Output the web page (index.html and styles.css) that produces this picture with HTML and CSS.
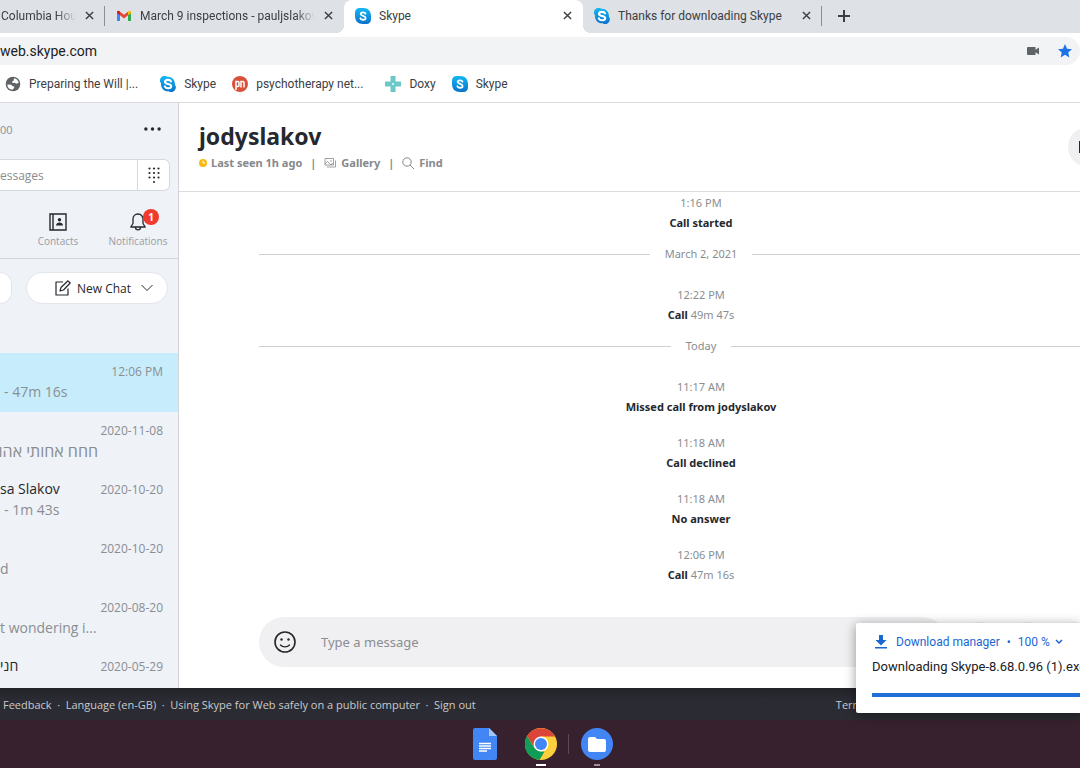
FILE: index.html
```html
<!DOCTYPE html>
<html lang="en">
<head>
    <meta charset="UTF-8">
    <meta name="viewport" content="width=device-width, initial-scale=1.0">
    <title>Skype</title>
    <link rel="stylesheet" href="styles.css">
</head>
<body>
    <!-- Shared icons -->
    <svg class="sprites" aria-hidden="true">
        <defs>
            <linearGradient id="skypeBlue" x1="0" y1="0" x2="0" y2="1">
                <stop offset="0" stop-color="#14b8f2"/>
                <stop offset="1" stop-color="#0a72cc"/>
            </linearGradient>
        </defs>
        <symbol id="skype" viewBox="0 0 16 16">
            <path fill="url(#skypeBlue)" d="M4.500 0h4C13 0 16 3 16 8v3.500A4.500 4.500 0 0 1 11.500 16H8C3 16 0 13 0 8V4.500A4.500 4.500 0 0 1 4.500 0z"/>
            <path fill="none" stroke="#fff" stroke-width="1.800" stroke-linecap="round" d="M10.500 5.600C9.800 3.800 5.700 3.800 5.700 6c0 2.300 4.900 1.400 4.900 3.900 0 2.300-4.300 2.500-5.200.4"/>
        </symbol>
        <symbol id="skype-old" viewBox="0 0 16 16">
            <path fill="url(#skypeBlue)" d="M4.500 0c1 0 1.800.3 2.500.8 4.600-.7 8.600 3.200 7.800 7.900A4.700 4.700 0 0 1 8.700 15C4.300 15.700.5 12 1.200 7.200A4.600 4.600 0 0 1 4.500 0z"/>
            <path fill="url(#skypeBlue)" d="M0 4.500A4.500 4.500 0 0 1 7 .8l8 8.200a4.500 4.500 0 0 1-6.300 6.200C4 15.500 1 12 1.200 7.500A4.500 4.500 0 0 1 0 4.500z"/>
            <path fill="none" stroke="#fff" stroke-width="2.100" stroke-linecap="round" d="M11 5.400C10 3.200 5 3.300 5 6c0 2.700 6.200 1.300 6.200 4.200 0 2.600-5.400 2.800-6.400.2"/>
        </symbol>
        <symbol id="close" viewBox="0 0 10 10">
            <path fill="none" stroke="currentColor" stroke-width="1.600" d="M1 1l8 8M9 1L1 9"/>
        </symbol>
    </svg>

    <header class="browser">
        <div class="tabs">
            <div class="tab tab-first">
                <span class="tab-title">Columbia House</span>
                <button class="tab-close" aria-label="Close tab"><svg><use href="#close"/></svg></button>
            </div>
            <div class="tab">
                <svg class="favicon" viewBox="0 0 16 16">
                    <path fill="#4285f4" d="M1 4v9h3V6.500L1 4z"/>
                    <path fill="#34a853" d="M12 6.500V13h3V4l-3 2.500z"/>
                    <path fill="#ea4335" d="M4 3.800l4 3 4-3v3.500l-4 3.100-4-3.100z"/>
                    <path fill="#c5221f" d="M1 4.200C1 2.400 2.800 2.300 4 3.400v3.900L1 5z"/>
                    <path fill="#fbbc04" d="M15 4.200c0-1.800-1.800-1.900-3-.8v3.900L15 5z"/>
                </svg>
                <span class="tab-title">March 9 inspections - pauljslakov</span>
                <button class="tab-close" aria-label="Close tab"><svg><use href="#close"/></svg></button>
            </div>
            <div class="tab active">
                <svg class="favicon"><use href="#skype"/></svg>
                <span class="tab-title">Skype</span>
                <button class="tab-close" aria-label="Close tab"><svg><use href="#close"/></svg></button>
            </div>
            <div class="tab">
                <svg class="favicon"><use href="#skype-old"/></svg>
                <span class="tab-title">Thanks for downloading Skype</span>
                <button class="tab-close" aria-label="Close tab"><svg><use href="#close"/></svg></button>
            </div>
            <button class="new-tab" aria-label="New tab">
                <svg viewBox="0 0 12 12"><path stroke="currentColor" stroke-width="2" d="M6 0v12M0 6h12"/></svg>
            </button>
        </div>
        <div class="address-bar">
            <input type="text" aria-label="Address" value="web.skype.com">
            <svg class="camera" viewBox="0 0 12 8"><path fill="#5f6368" d="M1 0h7.500v2.800L12 .5v7L8.500 5.200V8H1a1 1 0 0 1-1-1V1a1 1 0 0 1 1-1z"/></svg>
            <svg class="star" viewBox="0 0 20 20"><path fill="#1a73e8" d="M10 0l2.900 6.800 7.100.6-5.400 4.700 1.600 7.100L10 15.500l-6.200 3.700 1.600-7.100L0 7.400l7.100-.6z"/></svg>
        </div>
        <nav class="bookmarks">
            <a href="#" class="long">
                <svg viewBox="0 0 16 16"><circle cx="8" cy="8" r="7.300" fill="#5f6368"/><path fill="#fff" d="M9 2.300a5.800 5.800 0 0 1 4.700 4.500l-2.400.9-1.600-1-2.300.3-.3-1.500 1.500-.8zM2.300 8.500l4 .2 1.300 1.500 1.800.4-.5 1.700-1.600 1.500A5.800 5.800 0 0 1 2.300 8.500z"/></svg>
                <span>Preparing the Will |...</span>
            </a>
            <a href="#"><svg><use href="#skype-old"/></svg><span>Skype</span></a>
            <a href="#" class="long">
                <svg viewBox="0 0 16 16"><circle cx="8" cy="8" r="8" fill="#d9503a"/><path fill="none" stroke="#fff" stroke-width="1.500" d="M4 14V5.500h2a1 1 0 0 1 1 1V9.500a1 1 0 0 1-1 1H4M9 11.500V5.500h2a1 1 0 0 1 1 1v5"/></svg>
                <span>psychotherapy net...</span>
            </a>
            <a href="#">
                <svg viewBox="0 0 16 16"><path fill="#6cc9c8" d="M5.500 0h5v5.500H16v5h-5.500V16h-5v-5.500H0v-5h5.500z"/><circle cx="8" cy="8" r="1" fill="#fff"/></svg>
                <span>Doxy</span>
            </a>
            <a href="#"><svg><use href="#skype"/></svg><span>Skype</span></a>
        </nav>
    </header>

    <main>
        <aside class="sidebar">
            <div class="profile">
                <span>00</span>
                <button aria-label="More">
                    <svg viewBox="0 0 18 4"><circle cx="2" cy="2" r="1.800"/><circle cx="9" cy="2" r="1.800"/><circle cx="16" cy="2" r="1.800"/></svg>
                </button>
            </div>
            <div class="search">
                <input type="text" aria-label="Search messages" placeholder="essages">
                <button aria-label="Dial pad">
                    <svg viewBox="0 0 12 16">
                        <circle cx="1.500" cy="1.500" r="1.100"/><circle cx="6" cy="1.500" r="1.100"/><circle cx="10.500" cy="1.500" r="1.100"/>
                        <circle cx="1.500" cy="6" r="1.100"/><circle cx="6" cy="6" r="1.100"/><circle cx="10.500" cy="6" r="1.100"/>
                        <circle cx="1.500" cy="10.500" r="1.100"/><circle cx="6" cy="10.500" r="1.100"/><circle cx="10.500" cy="10.500" r="1.100"/>
                        <circle cx="6" cy="15" r="1"/>
                    </svg>
                </button>
            </div>
            <nav class="sections">
                <a href="#">
                    <svg viewBox="0 0 18 18"><path fill="none" stroke="currentColor" stroke-width="1.400" d="M1 1h16v16H1zM4 1v16"/><circle cx="10.500" cy="6.800" r="1.700"/><path d="M7 12.500c0-4 7-4 7 0z"/></svg>
                    <span>Contacts</span>
                </a>
                <a href="#">
                    <svg viewBox="0 0 18 18"><path fill="none" stroke="currentColor" stroke-width="1.300" stroke-linejoin="round" d="M9 1C6 1 4 3.200 4 6v4.500L1.800 14h14.400L14 10.500V6c0-2.800-2-5-5-5zM6.500 14.500c0 3.200 5 3.200 5 0"/></svg>
                    <span>Notifications</span>
                    <b class="badge">1</b>
                </a>
            </nav>
            <div class="actions">
                <button class="meet" aria-label="Meet now"></button>
                <button class="new-chat">
                    <svg viewBox="0 0 16 16"><path fill="none" stroke="currentColor" stroke-width="1.200" stroke-linejoin="round" d="M8 2H1v13h12V8.500M5 11l1-3.500L13 .8l2.200 2.200L8.500 10z"/></svg>
                    New Chat
                    <svg class="chevron" viewBox="0 0 12 8"><path fill="none" stroke="currentColor" d="M.5 1l5.500 5.500L11.500 1"/></svg>
                </button>
            </div>
            <ul class="chats">
                <li class="selected"><time>12:06 PM</time><p class="indent">- 47m 16s</p></li>
                <li><time>2020-11-08</time><p class="hebrew" dir="rtl">חחח אחותי אהו</p></li>
                <li><h3>sa Slakov</h3><time>2020-10-20</time><p class="indent">- 1m 43s</p></li>
                <li><time>2020-10-20</time><p>d</p></li>
                <li><time>2020-08-20</time><p>t wondering i...</p></li>
                <li><h3>חני</h3><time>2020-05-29</time></li>
            </ul>
        </aside>

        <section class="chat">
            <div class="chat-header">
                <div>
                    <h1>jodyslakov</h1>
                    <div class="status">
                        <svg class="away" viewBox="0 0 8 8"><circle cx="4" cy="4" r="4" fill="#fcb80d"/><path fill="none" stroke="#fff" d="M4 1.500V4h2"/></svg>
                        <span>Last seen 1h ago</span>
                        <span class="bar">|</span>
                        <a href="#"><svg viewBox="0 0 12 12"><path fill="none" stroke="currentColor" stroke-width=".8" d="M1 1.500h8.500v6.500H1zM3 10h8.500V3.500M1 7l2.500-2.500L7 8l1.500-2 1 1"/><circle cx="7" cy="4" r=".7"/></svg>Gallery</a>
                        <span class="bar">|</span>
                        <a href="#"><svg viewBox="0 0 12 12"><circle cx="5" cy="5" r="4.200" fill="none" stroke="currentColor"/><path stroke="currentColor" d="M8 8l4 4"/></svg>Find</a>
                    </div>
                </div>
                <div class="call-buttons">
                    <button aria-label="Video call"><svg viewBox="0 0 18 12"><path d="M0 0h12v12H0zM13 4l5-3v10l-5-3z"/></svg></button>
                    <button aria-label="Call"></button>
                    <button aria-label="Add people"></button>
                </div>
            </div>

            <div class="messages">
                <div class="event"><time>1:16 PM</time><p><b>Call started</b></p></div>
                <div class="day">March 2, 2021</div>
                <div class="event"><time>12:22 PM</time><p><b>Call</b> 49m 47s</p></div>
                <div class="day">Today</div>
                <div class="event"><time>11:17 AM</time><p><b>Missed call from jodyslakov</b></p></div>
                <div class="event"><time>11:18 AM</time><p><b>Call declined</b></p></div>
                <div class="event"><time>11:18 AM</time><p><b>No answer</b></p></div>
                <div class="event"><time>12:06 PM</time><p><b>Call</b> 47m 16s</p></div>
            </div>

            <div class="composer">
                <div class="message-box">
                    <button aria-label="Emoji">
                        <svg viewBox="0 0 22 22"><circle cx="11" cy="11" r="10" fill="none" stroke="currentColor" stroke-width="1.600"/><circle cx="7.500" cy="8.500" r="1.200"/><circle cx="14.500" cy="8.500" r="1.200"/><path fill="none" stroke="currentColor" stroke-width="1.300" stroke-linecap="round" d="M6.500 14c2 2.500 7 2.500 9 0"/></svg>
                    </button>
                    <input type="text" aria-label="Message" placeholder="Type a message">
                </div>
                <button class="round" aria-label="Add files"></button>
                <button class="round" aria-label="Send contacts"></button>
                <button class="round" aria-label="Voice message"></button>
                <button class="round" aria-label="More options"></button>
            </div>
        </section>
    </main>

    <footer class="footer">
        <a href="#">Feedback</a><i>·</i><a href="#">Language (en-GB)</a><i>·</i><a href="#">Using Skype for Web safely on a public computer</a><i>·</i><a href="#">Sign out</a>
        <a href="#" class="terms">Terms</a>
    </footer>

    <div class="shelf">
        <button aria-label="Docs">
            <svg class="docs" viewBox="0 0 24 32"><path fill="#4285f4" d="M2 0h14l8 8v22a2 2 0 0 1-2 2H2a2 2 0 0 1-2-2V2a2 2 0 0 1 2-2z"/><path fill="#a6c5fa" d="M16 0l8 8h-8z"/><path stroke="#fff" stroke-width="1.500" d="M6 15.500h12M6 18h12M6 20.500h12M6 23h8"/></svg>
        </button>
        <button aria-label="Chrome" class="running current">
            <svg viewBox="0 0 32 32">
                <circle cx="16" cy="16" r="16" fill="#fdd03b"/>
                <path fill="#db4437" d="M2.100 8A16 16 0 0 1 29.900 8.500H16L9.500 20z"/>
                <path fill="#0f9d58" d="M2.100 8l7.300 12L16 23.500h3.500L14.500 32A16 16 0 0 1 2.100 8z"/>
                <circle cx="16" cy="16" r="7.500" fill="#fff"/><circle cx="16" cy="16" r="6" fill="#4285f4"/>
            </svg>
        </button>
        <button aria-label="Files" class="running divided">
            <svg viewBox="0 0 32 32"><circle cx="16" cy="16" r="16" fill="#4285f4"/><path fill="#fff" d="M9 9h5l2 2h7a2 2 0 0 1 2 2v9a2 2 0 0 1-2 2H9a2 2 0 0 1-2-2V11a2 2 0 0 1 2-2z"/></svg>
        </button>
    </div>

    <div class="download">
        <div class="download-title">
            <svg viewBox="0 0 12 14"><path fill="currentColor" d="M4 0h4v5h3.500L6 10.500.5 5H4zM0 12h12v1.500H0z"/></svg>
            <span>Download manager</span><span>•</span><span>100 %</span>
            <svg class="caret" viewBox="0 0 8 6"><path fill="none" stroke="currentColor" stroke-width="1.500" d="M1 1l3 3 3-3"/></svg>
        </div>
        <p>Downloading Skype-8.68.0.96 (1).exe</p>
        <div class="progress"></div>
    </div>
</body>
</html>
```

FILE: styles.css
```css
* {
    box-sizing: border-box;
}

body {
    margin: 0;
    height: 100vh;
    display: flex;
    flex-direction: column;
    position: relative;
    overflow: hidden;
    background: white;
    color: #25282d;
    font-family: "Noto Sans", "Open Sans", sans-serif;
    font-size: 11px;
}

h1, h3, p, ul {
    margin: 0;
    padding: 0;
}

button {
    padding: 0;
    border: none;
    background: none;
    color: inherit;
    font-family: inherit;
    display: flex;
    align-items: center;
    justify-content: center;
    cursor: pointer;
}

input {
    border: none;
    outline: none;
    padding: 0;
    min-width: 0;
    background: none;
    font-family: inherit;
}

a {
    color: inherit;
    text-decoration: none;
}

svg {
    flex: none;
    fill: currentColor;
}

.sprites {
    position: absolute;
    width: 0;
    height: 0;
}

/* Browser */
.browser {
    flex: none;
    font-family: Roboto, sans-serif;
    font-size: 12px;
    color: #3c4043;
    border-bottom: 1px solid #d9dbde;
}

.tabs {
    display: flex;
    height: 33px;
    background: #dee1e6;
}

.tab {
    position: relative;
    display: flex;
    align-items: center;
    flex: 0 0 239px;
    min-width: 0;
    padding: 0 10px 2px 11px;
    border-right: 1px solid transparent;
}

.tab::after {
    content: "";
    position: absolute;
    right: -1px;
    top: 6px;
    width: 1px;
    height: 20px;
    background: #8a8d91;
}

.tab:nth-child(2)::after {
    display: none;
}

.tab-first {
    flex-basis: 105px;
    padding-left: 1px;
}

.favicon {
    width: 16px;
    height: 16px;
    margin-right: 8px;
}

.tab-title {
    flex: 1;
    min-width: 0;
    overflow: hidden;
    white-space: nowrap;
    margin-right: 8px;
}

/* Long titles fade out before the close button */
.tab:nth-child(-n+2) .tab-title {
    -webkit-mask-image: linear-gradient(to left, transparent, black 20px);
    mask-image: linear-gradient(to left, transparent, black 20px);
}

.tab-close {
    width: 10px;
    height: 16px;
}

.tab-close svg {
    width: 9px;
    height: 9px;
}

.tab.active {
    background: white;
    border-radius: 8px 8px 0 0;
}

.tab.active::before,
.tab.active::after {
    content: "";
    position: absolute;
    top: auto;
    bottom: 0;
    width: 8px;
    height: 8px;
}

.tab.active::before {
    left: -8px;
    background: radial-gradient(circle at 0 0, transparent 8px, white 8px);
}

.tab.active::after {
    right: -9px;
    background: radial-gradient(circle at 100% 0, transparent 8px, white 8px);
}

.new-tab {
    width: 44px;
    padding-bottom: 2px;
}

.new-tab svg {
    width: 12px;
    height: 12px;
}

.address-bar {
    display: flex;
    align-items: center;
    height: 28px;
    margin: 4px 0;
    padding-right: 8px;
    background: #f1f3f4;
    border-radius: 0 14px 14px 0;
}

.address-bar input {
    flex: 1;
    font-size: 14px;
    color: #202124;
}

.camera {
    width: 12px;
    height: 8px;
    margin-right: 19px;
}

.star {
    width: 14px;
    height: 14px;
}

.bookmarks {
    display: flex;
    align-items: center;
    gap: 16px;
    height: 33px;
    padding: 0 0 4px 5px;
}

.bookmarks a {
    display: flex;
    align-items: center;
    gap: 8px;
}

.bookmarks .long {
    padding-right: 6px;
}

.bookmarks svg {
    width: 16px;
    height: 16px;
}

/* Skype */
main {
    flex: 1;
    min-height: 0;
    display: flex;
    overflow: hidden;
}

.sidebar {
    flex: 0 0 179px;
    overflow: hidden;
    background: #eff2f7;
    border-right: 1px solid #d2d4d8;
    font-family: "Open Sans", "Noto Sans", sans-serif;
}

.profile {
    display: flex;
    align-items: center;
    justify-content: space-between;
    height: 52px;
    margin-bottom: 4px;
    padding: 0 17px 0 0;
    color: #8c9096;
}

.profile button {
    color: #25282d;
}

.profile svg {
    width: 17px;
    height: 4px;
}

.search {
    display: flex;
    height: 32px;
    margin-right: 8px;
    background: white;
    border: 1px solid #d5d8dd;
    border-left: none;
    border-radius: 0 6px 6px 0;
}

.search input {
    flex: 1;
    font-size: 12px;
}

input::placeholder {
    color: #8a8d91;
    opacity: 1;
}

.search button {
    width: 32px;
    border-left: 1px solid #d5d8dd;
}

.search svg {
    width: 12px;
    height: 16px;
}

.sections {
    display: flex;
    justify-content: flex-end;
    height: 68px;
    padding-top: 22px;
    border-bottom: 1px solid #d2d4d8;
}

.sections a {
    position: relative;
    width: 80px;
    display: flex;
    flex-direction: column;
    align-items: center;
    gap: 2px;
}

.sections svg {
    width: 18px;
    height: 18px;
}

.sections span {
    font-size: 10px;
    line-height: 16px;
    color: #9a9da3;
}

.badge {
    position: absolute;
    left: 45px;
    top: -4px;
    width: 16px;
    height: 16px;
    border-radius: 50%;
    background: #f03a2e;
    color: white;
    font-size: 10px;
    line-height: 16px;
    text-align: center;
}

.actions {
    display: flex;
    gap: 14px;
    padding: 13px 10px 0 0;
}

.actions button {
    height: 32px;
    background: white;
    border: 1px solid #e2e5ea;
    border-radius: 16px;
    font-size: 12px;
}

.actions .meet {
    width: 12px;
    border-left: none;
    border-radius: 0 16px 16px 0;
}

.actions .new-chat {
    flex: 1;
    gap: 6px;
    padding-left: 14px;
}

.new-chat svg {
    width: 16px;
    height: 16px;
}

.new-chat .chevron {
    width: 12px;
    height: 8px;
    margin-left: 4px;
}

.chats {
    margin-top: 49px;
    list-style: none;
}

.chats li {
    display: grid;
    grid-template-columns: 1fr auto;
    grid-template-rows: 20px 20px;
    align-content: start;
    height: 59px;
    padding: 9px 15px 0 0;
    line-height: 20px;
    color: #8a8d91;
}

.chats .selected {
    background: #c7edfc;
}

.chats h3 {
    font-size: 14px;
    font-weight: normal;
    line-height: 18px;
    color: #25282d;
}

.chats time {
    grid-column: 2;
    font-size: 12px;
}

.chats p {
    grid-column: 1 / 3;
    font-size: 14px;
    white-space: nowrap;
}

.chats .indent {
    padding-left: 4px;
}

.chats .hebrew {
    width: 98px;
    font-size: 16px;
}

/* The conversation runs on past the right edge of the screen */
.chat {
    flex: 1;
    min-width: 0;
    margin-right: -143px;
    display: flex;
    flex-direction: column;
}

.chat-header {
    display: flex;
    justify-content: space-between;
    align-items: center;
    height: 89px;
    padding: 0 19px 0 20px;
    border-bottom: 1px solid #d9dbde;
}

.chat-header h1 {
    font-size: 23px;
    line-height: 32px;
}

.status {
    display: flex;
    align-items: center;
    font-weight: bold;
    line-height: 22px;
    color: #85888d;
}

.status a {
    display: flex;
    align-items: center;
    gap: 5px;
}

.status svg {
    width: 12px;
    height: 12px;
}

.status .away {
    width: 8px;
    height: 8px;
    margin-right: 4px;
}

.status .bar {
    margin: 0 8px;
}

.call-buttons {
    display: flex;
    gap: 8px;
}

.call-buttons button,
.round {
    width: 40px;
    height: 40px;
    border-radius: 50%;
    background: #f0f0f2;
}

.call-buttons svg {
    width: 18px;
    height: 12px;
}

.messages {
    flex: 1;
    padding: 1px 80px 0;
    line-height: 20px;
    color: #8a8d91;
}

.event {
    text-align: center;
}

.event time {
    display: block;
}

.event b {
    color: #25282d;
}

.event + .event {
    margin-top: 16px;
}

.day {
    display: flex;
    align-items: center;
    gap: 15px;
    margin: 11px 0 21px;
}

.day::before,
.day::after {
    content: "";
    flex: 1;
    height: 1px;
    background: #cfd0d2;
}

.composer {
    display: flex;
    align-items: center;
    gap: 8px;
    padding: 0 80px 21px;
}

.message-box {
    flex: 1;
    display: flex;
    align-items: center;
    height: 50px;
    margin-right: 4px;
    padding: 0 15px;
    background: #f0f0f2;
    border-radius: 25px;
}

.message-box svg {
    width: 22px;
    height: 22px;
}

.message-box input {
    flex: 1;
    margin-left: 25px;
    font-size: 13px;
}

.footer {
    flex: none;
    display: flex;
    align-items: center;
    height: 32px;
    padding: 0 200px 0 3px;
    background: linear-gradient(#222329, #2b2c33 12px);
    color: #c9cacd;
    font-family: "Open Sans", "Noto Sans", sans-serif;
}

.footer i {
    width: 14px;
    text-align: center;
    font-style: normal;
}

.footer .terms {
    margin-left: auto;
    margin-right: 12px;
}

/* Shelf */
.shelf {
    flex: none;
    display: flex;
    justify-content: center;
    height: 48px;
    padding-left: 2px;
    background: #38212e;
}

.shelf button {
    position: relative;
    width: 56px;
}

.shelf svg {
    width: 32px;
    height: 32px;
}

.shelf .docs {
    width: 24px;
}

.running::after {
    content: "";
    position: absolute;
    left: 25px;
    bottom: 2px;
    width: 6px;
    height: 2px;
    background: #9c9096;
}

.current::after {
    left: 23px;
    width: 10px;
    background: white;
}

.divided::before {
    content: "";
    position: absolute;
    left: -1px;
    top: 14px;
    width: 1px;
    height: 20px;
    background: #5d4a55;
}

/* Download popup */
.download {
    position: absolute;
    right: 0;
    bottom: 55px;
    width: 224px;
    height: 90px;
    padding: 8px 0 0 16px;
    overflow: hidden;
    background: white;
    border-radius: 2px 0 0 2px;
    box-shadow: 0 2px 12px rgba(0, 0, 0, 0.4);
    font-family: Roboto, sans-serif;
    color: #202124;
}

.download-title {
    display: flex;
    align-items: center;
    gap: 7px;
    height: 22px;
    padding-left: 3px;
    font-size: 12px;
    color: #1967d2;
}

.download-title svg {
    width: 12px;
    height: 14px;
    margin-right: 2px;
}

.download-title .caret {
    width: 8px;
    height: 6px;
    margin-left: -2px;
}

.download p {
    margin: 4px 0 16px;
    font-size: 13px;
    line-height: 20px;
    white-space: nowrap;
}

.progress {
    height: 4px;
    background: #1f6fd8;
}
```
